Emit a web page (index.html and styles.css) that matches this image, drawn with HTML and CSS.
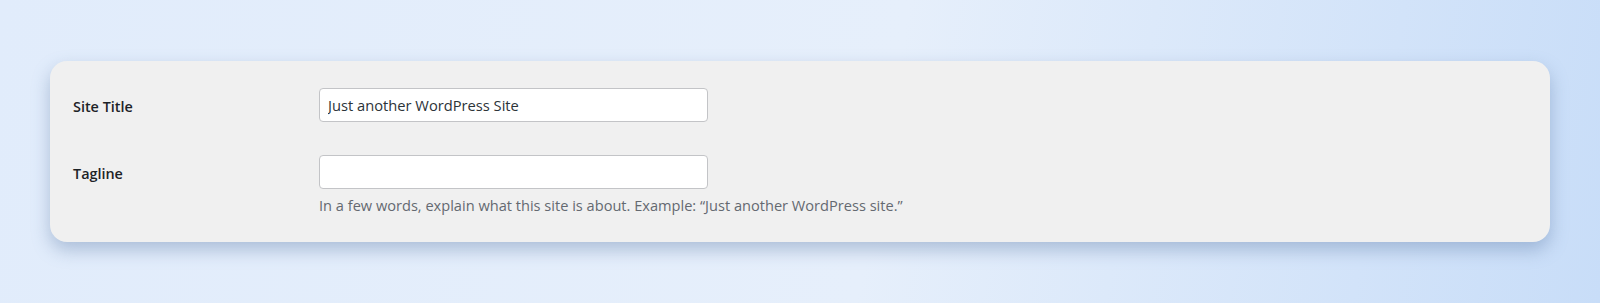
FILE: index.html
```html
<!DOCTYPE html>
<html lang="en">
<head>
    <meta charset="UTF-8">
    <meta name="viewport" content="width=device-width, initial-scale=1.0">
    <title>General Settings</title>
    <link rel="stylesheet" href="styles.css">
</head>
<body>
    <div class="settings-card">
        <!-- Site Title -->
        <div class="form-row">
            <label class="form-label" for="blogname">Site Title</label>
            <div class="form-field">
                <input type="text" id="blogname" class="text-input" value="Just another WordPress Site">
            </div>
        </div>

        <!-- Tagline -->
        <div class="form-row">
            <label class="form-label" for="blogdescription">Tagline</label>
            <div class="form-field">
                <input type="text" id="blogdescription" class="text-input" value="">
                <p class="description">In a few words, explain what this site is about. Example: &ldquo;Just another WordPress site.&rdquo;</p>
            </div>
        </div>
    </div>
</body>
</html>
```

FILE: styles.css
```css
* {
    margin: 0;
    padding: 0;
    box-sizing: border-box;
}

body {
    font-family: 'Open Sans', 'Noto Sans', sans-serif;
    background: linear-gradient(100deg, #e1ecfb 0%, #e6effb 55%, #c8ddf8 100%);
    height: 303px;
    padding: 61px 50px 0 50px;
    color: #1d2327;
}

.settings-card {
    background-color: #f0f0f0;
    border-radius: 17px;
    box-shadow: 0 8px 18px rgba(90, 120, 165, 0.4);
    height: 181px;
    padding: 27px 23px 0 23px;
    display: flex;
    flex-direction: column;
    gap: 33px;
}

.form-row {
    display: flex;
    align-items: flex-start;
}

.form-label {
    width: 246px;
    height: 34px;
    flex-shrink: 0;
    font-size: 14.4px;
    font-weight: 600;
    line-height: 37px;
    color: #1d2327;
}

.form-field {
    display: flex;
    flex-direction: column;
}

.text-input {
    width: 389px;
    height: 34px;
    padding: 0 8px;
    font-family: inherit;
    font-size: 14.7px;
    color: #2c3338;
    background-color: #fff;
    border: 1px solid #c3c4c7;
    border-radius: 4px;
    outline: none;
}

.description {
    margin-top: 6px;
    font-size: 14.6px;
    line-height: 21px;
    color: #646970;
}
```
